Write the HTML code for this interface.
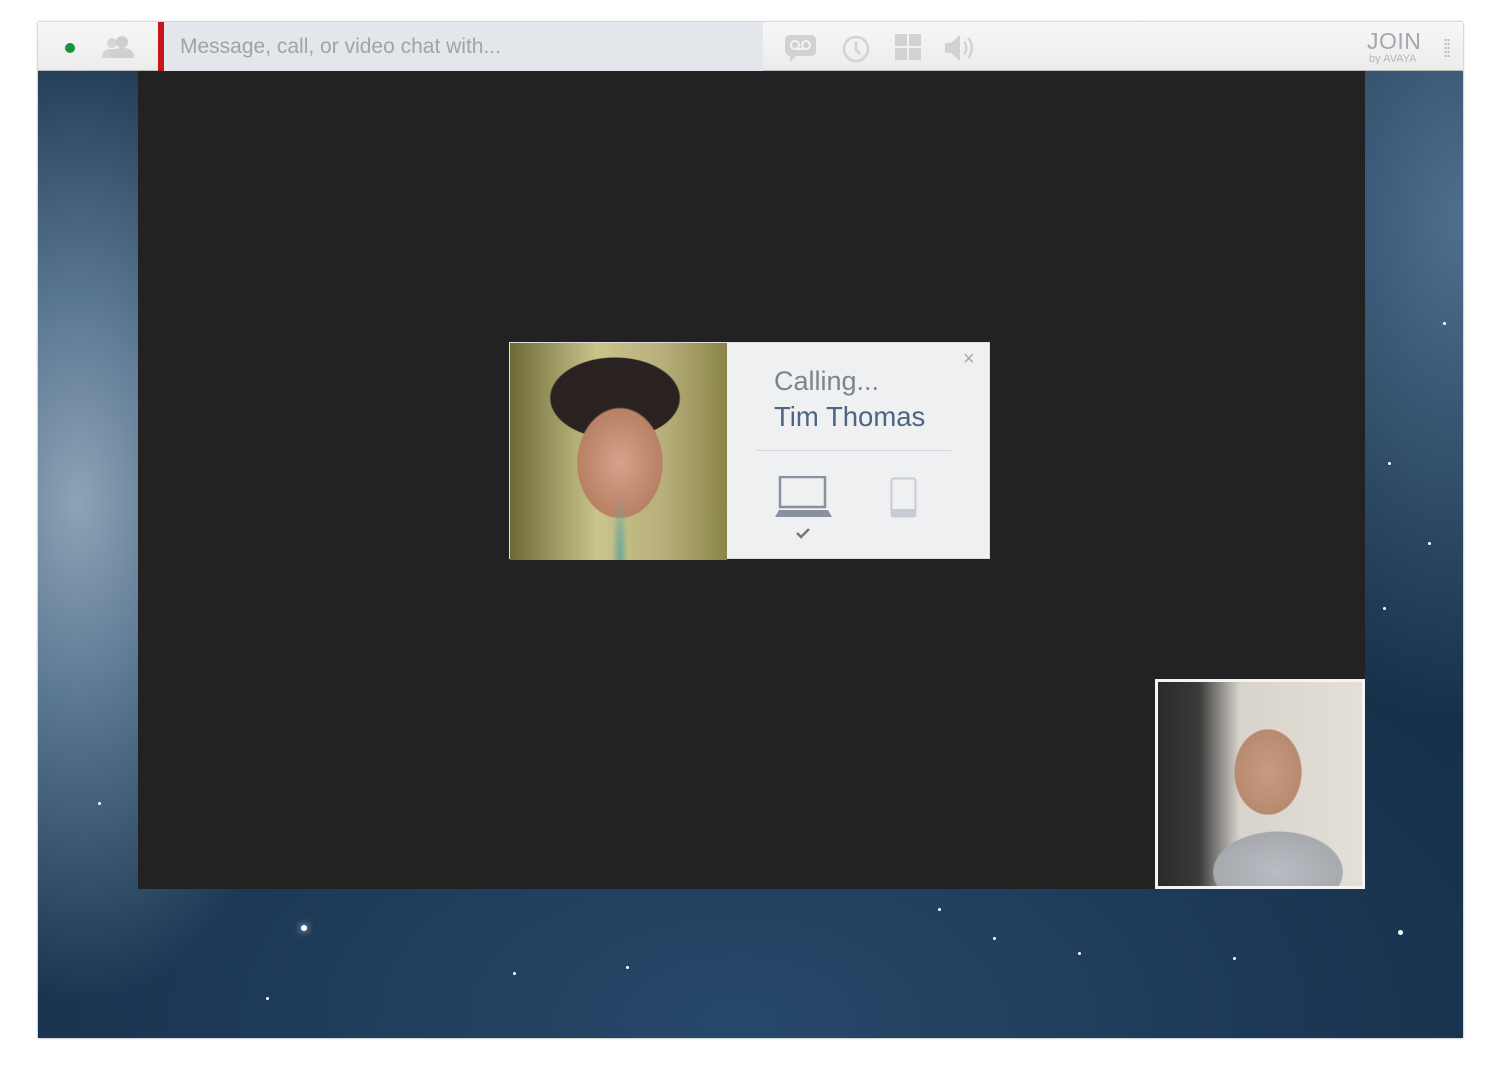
<!DOCTYPE html>
<html><head><style>
*{margin:0;padding:0;box-sizing:border-box}
body{width:1500px;height:1070px;background:#fff;position:relative;overflow:hidden;font-family:"Liberation Sans",sans-serif}
.win{position:absolute;left:38px;top:22px;width:1425px;height:1016px;overflow:hidden;
background:radial-gradient(ellipse 260px 500px at 40px 480px,#8ea3b6 0%,#5b7893 40%,rgba(40,70,100,0) 100%),
radial-gradient(ellipse 300px 500px at 1425px 200px,#4f6f8e 0%,rgba(40,70,100,0) 100%),
radial-gradient(ellipse 900px 500px at 700px 1000px,#27496a 0%,#1c3856 60%,#163049 100%),#1d3a58;box-shadow:0 0 2px #888}
.bar{position:absolute;left:0;top:0;width:1425px;height:49px;background:linear-gradient(#f7f7f7,#ececec);border-bottom:1px solid #bbb}
.inp{position:absolute;left:120px;top:0;width:605px;height:49px;background:#e3e6ea;border-left:6px solid #c8151b}
.inp span{position:absolute;left:16px;top:13px;font-size:21px;color:#a0a4aa}
.dark{position:absolute;left:100px;top:49px;width:1227px;height:818px;background:#222}
.card{position:absolute;left:509px;top:342px;width:481px;height:217px;background:#eff0f1;border:1px solid #ddd}
.ph{position:absolute;left:0;top:0;width:217px;height:217px;background:radial-gradient(ellipse 8px 60px at 110px 210px,#6fa89a 0%,rgba(0,0,0,0) 100%),radial-gradient(ellipse 70px 90px at 110px 120px,#d6a28a 0%,#b88064 60%,rgba(0,0,0,0) 62%),radial-gradient(ellipse 80px 50px at 105px 55px,#2a2220 0%,#2a2220 80%,rgba(0,0,0,0) 82%),linear-gradient(90deg,#6e6a38,#c9c48a 40%,#b8b07c 70%,#8a8548)}
.self{position:absolute;left:1155px;top:679px;width:210px;height:210px;border:3px solid #f4f4f4;background:radial-gradient(ellipse 55px 70px at 110px 90px,#c99a80 0%,#b88a70 60%,rgba(0,0,0,0) 62%),radial-gradient(ellipse 80px 50px at 120px 190px,#b9bcc2 0%,#a6a9ae 80%,rgba(0,0,0,0) 82%),linear-gradient(90deg,#2a2a2a 0,#3a3a3a 20%,#d8d4cc 40%,#e4e0d8 100%)}
.star{position:absolute;width:3px;height:3px;border-radius:50%;background:#fff}
</style></head><body>
<div class="win">
<div class="bar">
<div style="position:absolute;left:27px;top:21px;width:10px;height:10px;border-radius:50%;background:#15953f"></div>
<svg style="position:absolute;left:60px;top:14px" width="40" height="24"><circle cx="14" cy="7" r="5" fill="#d5d5d5"/><path d="M4 22c0-7 4-9 10-9s10 2 10 9z" fill="#d5d5d5"/><circle cx="24" cy="6" r="6" fill="#cfcfcf"/><path d="M12 22c0-8 5-10 12-10s12 2 12 10z" fill="#cfcfcf"/></svg>
<div class="inp"><span>Message, call, or video chat with...</span></div>
<svg style="position:absolute;left:746px;top:12px" width="34" height="30"><rect x="1" y="1" width="31" height="21" rx="5" fill="#d2d2d2"/><path d="M6 20l0 8 7-7z" fill="#d2d2d2"/><circle cx="11" cy="11" r="4" fill="none" stroke="#f3f3f3" stroke-width="2"/><circle cx="22" cy="11" r="4" fill="none" stroke="#f3f3f3" stroke-width="2"/><path d="M11 15h11" stroke="#f3f3f3" stroke-width="2"/></svg>
<svg style="position:absolute;left:803px;top:12px" width="30" height="30"><circle cx="15" cy="15" r="12" fill="none" stroke="#d2d2d2" stroke-width="2.5"/><path d="M15 8v8l4 4" fill="none" stroke="#d2d2d2" stroke-width="2.5"/></svg>
<svg style="position:absolute;left:857px;top:12px" width="28" height="28"><rect x="0" y="0" width="12" height="12" fill="#d2d2d2"/><rect x="14" y="0" width="12" height="12" fill="#d2d2d2"/><rect x="0" y="14" width="12" height="12" fill="#d2d2d2"/><rect x="14" y="14" width="12" height="12" fill="#d2d2d2"/></svg>
<svg style="position:absolute;left:905px;top:11px" width="34" height="30"><path d="M2 10h6l9-8v26l-9-8H2z" fill="#d2d2d2"/><path d="M21 9c3 3 3 9 0 12M25 5c5 5 5 15 0 20" fill="none" stroke="#d2d2d2" stroke-width="2.5"/></svg>
<div style="position:absolute;left:1329px;top:6px;font-size:23px;color:#a4a8ae;letter-spacing:0.5px">JOIN</div>
<div style="position:absolute;left:1331px;top:31px;font-size:11px;color:#b4b8be">by AVAYA</div>
<div style="position:absolute;left:1406px;top:16px;width:6px;height:20px;background:radial-gradient(circle,#bbb 1px,transparent 1.3px) 0 0/3px 4px"></div>
</div>
<div class="dark"></div>
<div class="star" style="left:263px;top:903px;width:6px;height:6px;box-shadow:0 0 8px #fff"></div>
<div class="star" style="left:1360px;top:908px;width:5px;height:5px"></div>
<div class="star" style="left:900px;top:886px"></div><div class="star" style="left:588px;top:944px"></div>
<div class="star" style="left:955px;top:915px"></div><div class="star" style="left:1345px;top:585px"></div>
<div class="star" style="left:1390px;top:520px"></div><div class="star" style="left:1405px;top:300px"></div>
<div class="star" style="left:60px;top:780px"></div><div class="star" style="left:228px;top:975px"></div>
<div class="star" style="left:1040px;top:930px"></div><div class="star" style="left:1195px;top:935px"></div>
<div class="star" style="left:1350px;top:440px"></div><div class="star" style="left:475px;top:950px"></div>
</div>
<div class="card">
<div class="ph"></div>
<div style="position:absolute;left:264px;top:23px;font-size:27px;color:#7e838c">Calling...</div>
<div style="position:absolute;left:264px;top:58px;font-size:27.5px;color:#4e6582">Tim Thomas</div>
<div style="position:absolute;left:453px;top:5px;font-size:20px;color:#aaa">×</div>
<div style="position:absolute;left:246px;top:107px;width:195px;height:1px;background:#d4d6da"></div>
<svg style="position:absolute;left:265px;top:133px" width="58" height="42"><rect x="5" y="1" width="45" height="30" fill="none" stroke="#8a90a0" stroke-width="2.5"/><path d="M0 41l4-7h49l4 7z" fill="#8a90a0"/></svg>
<svg style="position:absolute;left:285px;top:184px" width="16" height="12"><path d="M2 6l4 4 8-8" fill="none" stroke="#777" stroke-width="2.5"/></svg>
<svg style="position:absolute;left:380px;top:134px" width="28" height="42"><rect x="1.5" y="1.5" width="24" height="38" rx="2" fill="none" stroke="#c8ccd2" stroke-width="2"/><rect x="2" y="32" width="23" height="7" fill="#c8ccd2"/></svg>
</div>
<div class="self"></div>
</body></html>
